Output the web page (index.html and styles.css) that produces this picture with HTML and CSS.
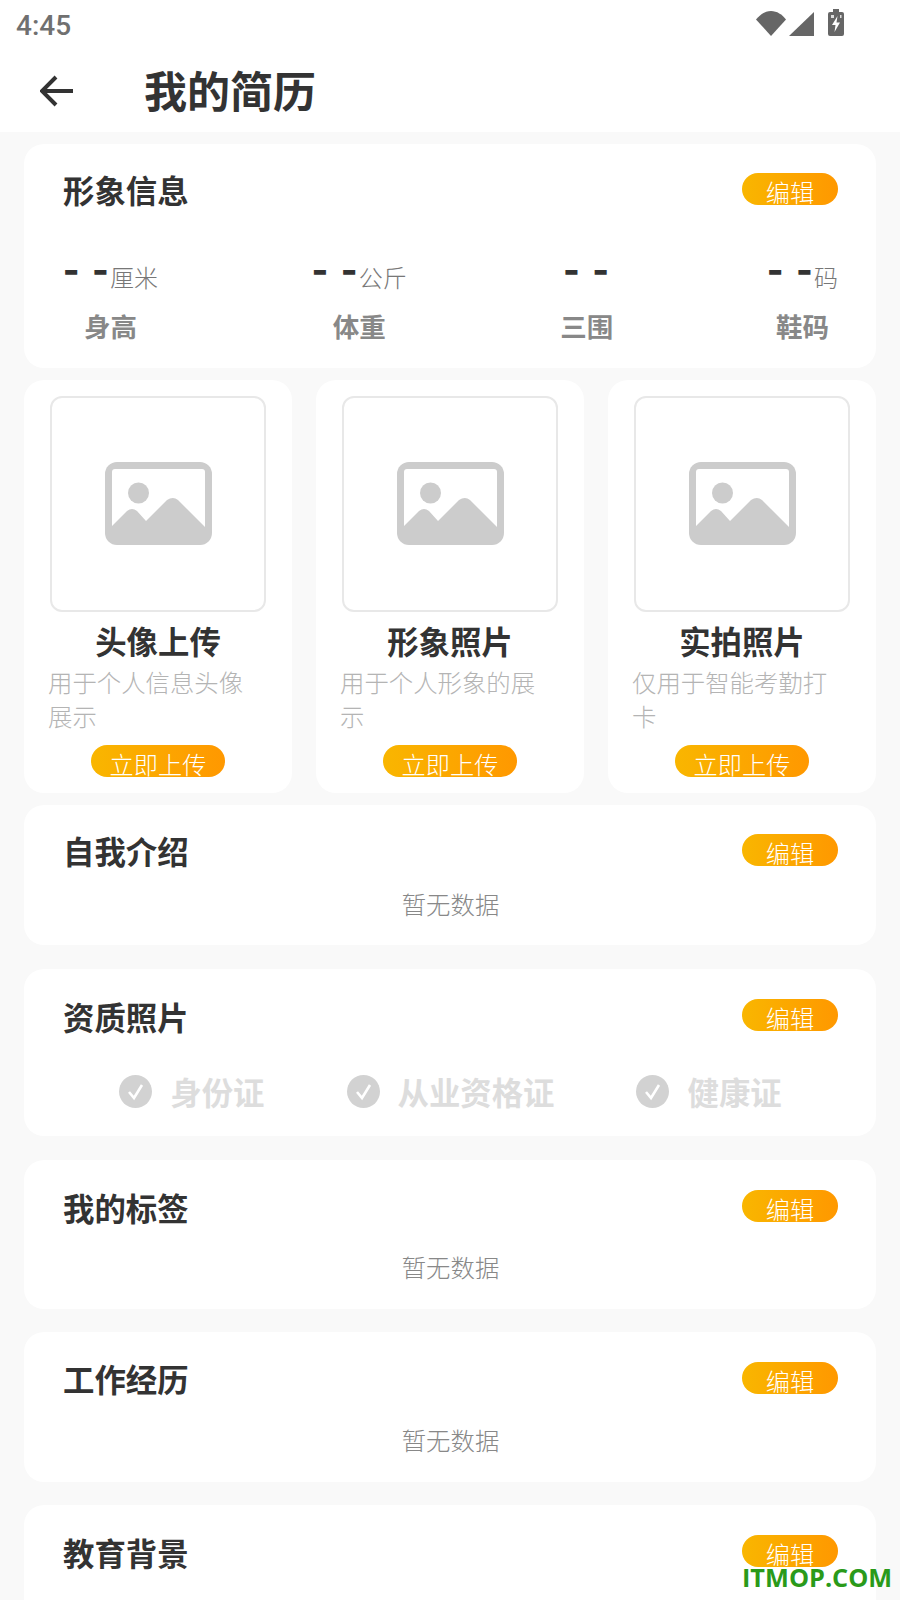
FILE: index.html
```html
<!DOCTYPE html>
<html lang="zh">
<head>
<meta charset="utf-8">
<title>我的简历</title>
<link rel="stylesheet" href="styles.css">
</head>
<body>
<div class="page">
  <header class="appbar">
    <div class="status">
      <span class="clock">4:45</span>
      <div class="status-icons">
        <svg class="i-wifi" viewBox="0 0 30 25"><path d="M0 8.5C4 3.5 9 0 15 0s11 3.500 15 8.500L15 25z" fill="#666"/></svg>
        <svg class="i-signal" viewBox="0 0 25 24"><path d="M25 0v24H0z" fill="#666"/></svg>
        <svg class="i-battery" viewBox="0 0 16 27"><path d="M5 0h6v3h3a2 2 0 0 1 2 2v20a2 2 0 0 1-2 2H2a2 2 0 0 1-2-2V5a2 2 0 0 1 2-2h3z" fill="#666"/><path d="M9.500 7 4 16h3.500l-1 7L12 13.500H8.500z" fill="#fff"/><path d="M3 6h3v3H3zM12 6h1.500v3H12z" fill="#ddd"/></svg>
      </div>
    </div>
    <div class="toolbar">
      <svg class="i-back" viewBox="0 0 34 32"><path d="M33 16H3M16 2 2 16l14 14" fill="none" stroke="#333" stroke-width="4"/></svg>
      <h1>我的简历</h1>
    </div>
  </header>

  <main class="content">
    <section class="card card-profile">
      <div class="head"><h2>形象信息</h2><span class="btn">编辑</span></div>
      <div class="stats">
        <div class="stat"><div class="val"><b>- -</b><span>厘米</span></div><div class="lab">身高</div></div>
        <div class="stat"><div class="val"><b>- -</b><span>公斤</span></div><div class="lab">体重</div></div>
        <div class="stat"><div class="val"><b>- -</b></div><div class="lab">三围</div></div>
        <div class="stat"><div class="val"><b>- -</b><span>码</span></div><div class="lab">鞋码</div></div>
      </div>
    </section>

    <div class="photos">
      <section class="photo">
        <div class="frame"><svg class="i-image" viewBox="0 0 107 83"><rect width="107" height="83" rx="12" fill="#ccc"/><rect x="7" y="7" width="93" height="66" rx="3" fill="#fff"/><circle cx="33.500" cy="31" r="10.500" fill="#ccc"/><path d="M7 73V64L22 49q5-4 10 0l9 10 21-21q6-4 11 0l27 27v8z" fill="#ccc"/></svg></div>
        <h3>头像上传</h3>
        <p>用于个人信息头像展示</p>
        <span class="btn btn-wide">立即上传</span>
      </section>
      <section class="photo">
        <div class="frame"><svg class="i-image" viewBox="0 0 107 83"><rect width="107" height="83" rx="12" fill="#ccc"/><rect x="7" y="7" width="93" height="66" rx="3" fill="#fff"/><circle cx="33.500" cy="31" r="10.500" fill="#ccc"/><path d="M7 73V64L22 49q5-4 10 0l9 10 21-21q6-4 11 0l27 27v8z" fill="#ccc"/></svg></div>
        <h3>形象照片</h3>
        <p>用于个人形象的展示</p>
        <span class="btn btn-wide">立即上传</span>
      </section>
      <section class="photo">
        <div class="frame"><svg class="i-image" viewBox="0 0 107 83"><rect width="107" height="83" rx="12" fill="#ccc"/><rect x="7" y="7" width="93" height="66" rx="3" fill="#fff"/><circle cx="33.500" cy="31" r="10.500" fill="#ccc"/><path d="M7 73V64L22 49q5-4 10 0l9 10 21-21q6-4 11 0l27 27v8z" fill="#ccc"/></svg></div>
        <h3>实拍照片</h3>
        <p>仅用于智能考勤打卡</p>
        <span class="btn btn-wide">立即上传</span>
      </section>
    </div>

    <section class="card card-intro">
      <div class="head"><h2>自我介绍</h2><span class="btn">编辑</span></div>
      <div class="empty">暂无数据</div>
    </section>

    <section class="card card-certs">
      <div class="head"><h2>资质照片</h2><span class="btn">编辑</span></div>
      <div class="certs">
        <div class="cert"><svg class="i-check" viewBox="0 0 33 33"><circle cx="16.500" cy="16.500" r="16.500" fill="#d2d2d2"/><path d="M10 17l5 6 8-13" fill="none" stroke="#fff" stroke-width="2.600"/></svg><span>身份证</span></div>
        <div class="cert"><svg class="i-check" viewBox="0 0 33 33"><circle cx="16.500" cy="16.500" r="16.500" fill="#d2d2d2"/><path d="M10 17l5 6 8-13" fill="none" stroke="#fff" stroke-width="2.600"/></svg><span>从业资格证</span></div>
        <div class="cert"><svg class="i-check" viewBox="0 0 33 33"><circle cx="16.500" cy="16.500" r="16.500" fill="#d2d2d2"/><path d="M10 17l5 6 8-13" fill="none" stroke="#fff" stroke-width="2.600"/></svg><span>健康证</span></div>
      </div>
    </section>

    <section class="card card-tags">
      <div class="head"><h2>我的标签</h2><span class="btn">编辑</span></div>
      <div class="empty">暂无数据</div>
    </section>

    <section class="card card-work">
      <div class="head"><h2>工作经历</h2><span class="btn">编辑</span></div>
      <div class="empty">暂无数据</div>
    </section>

    <section class="card card-last">
      <div class="head"><h2>教育背景</h2><span class="btn">编辑</span></div>
    </section>
  </main>
  <div class="watermark">ITMOP.COM</div>
</div>
</body>
</html>
```

FILE: styles.css
```css
* { box-sizing: border-box; }
html, body { margin: 0; padding: 0; }
body {
  background: #f9f9f9;
  font-family: "Noto Sans CJK SC", "Noto Sans", sans-serif;
  color: #333;
}
.page { position: relative; width: 900px; height: 1600px; overflow: hidden; }

.appbar { background: #fff; height: 132px; }
.status { height: 50px; display: flex; justify-content: space-between; padding: 0 56px 0 16px; }
.clock { font-family: Roboto, sans-serif; font-size: 28px; line-height: 52px; font-weight: 500; color: #707070; }
.status-icons { display: flex; align-items: flex-start; }
.i-wifi { width: 30px; height: 25px; margin-top: 11px; }
.i-signal { width: 25px; height: 24px; margin: 12px 0 0 3px; }
.i-battery { width: 16px; height: 27px; margin: 9px 0 0 14px; }
.toolbar { height: 82px; display: flex; align-items: center; padding-left: 40px; }
.i-back { width: 34px; height: 32px; margin-top: -1px; }
h1 { margin: -4px 0 0 70px; font-size: 43px; line-height: 60px; font-weight: 700; }

.content { padding: 12px 24px 0; display: flex; flex-direction: column; }
.card { background: #fff; border-radius: 20px; padding: 26px 38px 0 39px; }
.head { display: flex; justify-content: space-between; align-items: flex-start; }
h2 { margin: 0; font-size: 31.4px; line-height: 40px; font-weight: 700; }
.btn {
  display: block; width: 96px; height: 32px; margin-top: 3px; border-radius: 16px;
  background: linear-gradient(90deg, #f9b600, #ff9800);
  color: #fff; font-size: 24.2px; line-height: 37px; font-weight: 300; text-align: center; overflow: hidden;
}

.card-profile { height: 224px; }
.stats { display: flex; justify-content: space-between; margin-top: 48px; }
.stat { display: flex; flex-direction: column; align-items: center; }
.val { height: 44px; display: flex; align-items: flex-start; white-space: nowrap; }
.val b { margin-top: -4px; font-size: 44px; line-height: 24px; font-weight: 700; letter-spacing: 1.500px; color: #333; }
.val span { font-size: 24px; line-height: 38px; font-weight: 300; color: #777; }
.lab { margin-top: 6px; font-size: 26.5px; line-height: 36px; font-weight: 700; color: #888; }

.photos { display: flex; justify-content: space-between; margin: 12px 0 12px; }
.photo { width: 268px; height: 413px; background: #fff; border-radius: 20px; padding: 16px 26px 0; }
.frame {
  width: 216px; height: 216px; border: 2px solid #e8e8e8; border-radius: 12px;
  display: flex; align-items: center; justify-content: center;
}
.i-image { width: 107px; height: 83px; margin-top: -2px; }
h3 { margin: 6px 0 0; font-size: 31.4px; line-height: 46px; font-weight: 700; text-align: center; }
.photo p { margin: 1px 0 0 -2px; width: 210px; font-size: 24.4px; line-height: 34px; font-weight: 300; color: #b4b4b4; }
.btn-wide { width: 134px; margin: 12px auto 0; }

.card-intro { height: 140px; margin-bottom: 24px; }
.empty { font-size: 24.4px; line-height: 34px; font-weight: 300; color: #888; text-align: center; }
.card-intro .empty { margin-top: 16px; }
.card-certs { height: 167px; margin-bottom: 24px; padding-top: 28px; }
.card-certs .btn, .card-tags .btn, .card-last .btn { margin-top: 2px; }
.certs { display: flex; justify-content: center; gap: 82px; margin-top: 32px; }
.cert { display: flex; align-items: center; gap: 18px; font-size: 31.4px; line-height: 46px; font-weight: 700; color: #ddd; }
.i-check { width: 33px; height: 33px; margin-top: -2px; }
.card-tags { height: 149px; margin-bottom: 23px; padding-top: 28px; }
.card-tags .empty { margin-top: 22px; }
.card-work { height: 150px; margin-bottom: 23px; padding-top: 27px; }
.card-work .empty { margin-top: 24px; }
.card-last { height: 140px; padding-top: 28px; }

.watermark {
  position: absolute; left: 742px; top: 1558px;
  font-family: "Open Sans", sans-serif; font-size: 25.3px; line-height: 38px; font-weight: 700; color: #2a9a1a;
}
```
